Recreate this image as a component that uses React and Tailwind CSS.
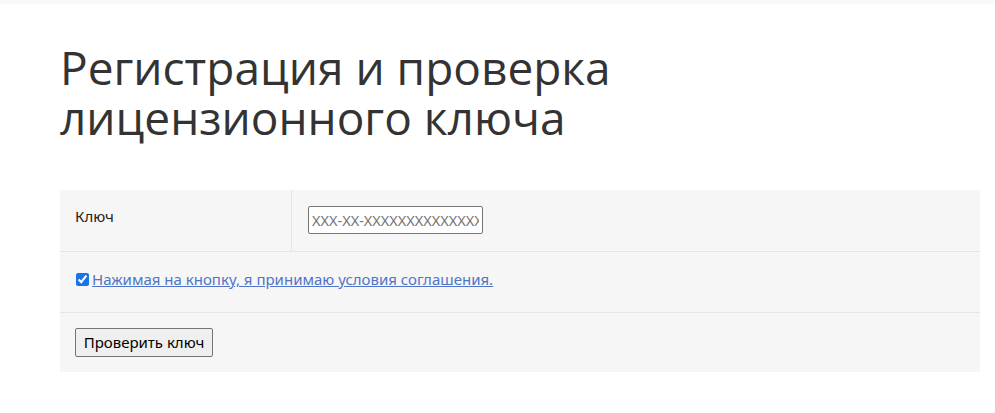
export default function App() {
  return (
    <div className="min-h-screen bg-white font-['Noto_Sans',sans-serif] text-[#222]">
      <div className="h-1 bg-[#f9f9f9]" />
      <main className="px-[60px] pr-[15px]">
        <h1 className="mt-[38px] font-['Open_Sans',sans-serif] text-[46px] leading-[50px] font-normal text-[#333]">
          Регистрация и проверка
          <br />
          лицензионного ключа
        </h1>

        <form className="mt-[48px] bg-[#f6f6f6]">
          <div className="flex h-[62px] border-b border-[#e5e5e5]">
            <div className="w-[232px] border-r border-[#e5e5e5] px-[15px] pt-[16px] text-[15px] leading-[20px]">
              Ключ
            </div>
            <div className="flex-1 px-[15px] pt-[16px] pl-[16px]">
              <input
                type="text"
                placeholder="XXX-XX-XXXXXXXXXXXXXXX"
                className="h-[28px] w-[175px] rounded-[2px] border border-[#767676] bg-white px-[3px] text-[14.5px] text-black placeholder:text-[#757575]"
              />
            </div>
          </div>

          <div className="h-[61px] border-b border-[#e5e5e5] px-[16px] pt-[16px]">
            <label className="flex items-center gap-[3px] text-[15px] leading-[22px]">
              <input type="checkbox" defaultChecked className="h-[13px] w-[13px] accent-[#1a73e8]" />
              <a href="#" className="text-[#4f74c9] underline">
                Нажимая на кнопку, я принимаю условия соглашения.
              </a>
            </label>
          </div>

          <div className="h-[59px] px-[15px] pt-[15px]">
            <button
              type="button"
              className="h-[29px] w-[138px] rounded-[2px] border border-[#767676] bg-[#efefef] text-[15px] text-black"
            >
              Проверить ключ
            </button>
          </div>
        </form>
      </main>
    </div>
  );
}
